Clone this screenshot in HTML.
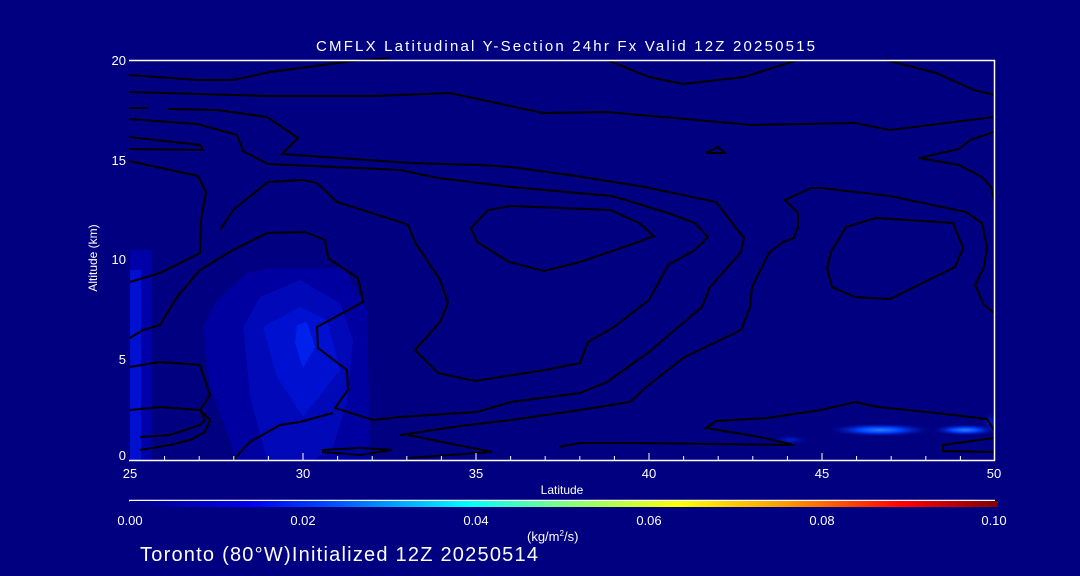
<!DOCTYPE html>
<html><head><meta charset="utf-8"><style>
html,body{margin:0;padding:0;background:#000080;}
svg{display:block;}
text{font-family:"Liberation Sans",sans-serif;fill:#fff;}
</style></head><body>
<svg width="1080" height="576" viewBox="0 0 1080 576" xmlns="http://www.w3.org/2000/svg">
<defs>
<linearGradient id="cb" x1="0" x2="1" y1="0" y2="0">
<stop offset="0" stop-color="#000080"/>
<stop offset="0.14" stop-color="#0000f0"/>
<stop offset="0.22" stop-color="#0040ff"/>
<stop offset="0.39" stop-color="#00ffff"/>
<stop offset="0.5" stop-color="#80ff80"/>
<stop offset="0.634" stop-color="#ffff00"/>
<stop offset="0.75" stop-color="#ffa000"/>
<stop offset="0.89" stop-color="#ff0000"/>
<stop offset="1" stop-color="#800000"/>
</linearGradient>
<radialGradient id="g1"><stop offset="0" stop-color="#2a80ff"/><stop offset="0.4" stop-color="#0040ff"/><stop offset="1" stop-color="#000080" stop-opacity="0"/></radialGradient>
<radialGradient id="g2"><stop offset="0" stop-color="#0020d0"/><stop offset="1" stop-color="#000080" stop-opacity="0"/></radialGradient>
</defs>
<rect width="1080" height="576" fill="#000080"/>
<rect x="130" y="250" width="22" height="210" fill="#0000a8"/>
<rect x="130" y="270" width="11" height="190" fill="#0010d0"/>
<polygon points="203,327 217,300 247,273 273,268 343,268 367,310 370,460 237,460 210,387" fill="#0000a0"/>
<polygon points="243,327 260,297 300,280 340,303 353,340 347,403 333,447 313,460 267,460 250,397" fill="#0008b8"/>
<polygon points="263,327 300,307 327,320 340,370 303,417 277,377" fill="#0010d0"/>
<polygon points="297,325 307,322 315,347 303,368 295,343" fill="#0020ec"/>
<ellipse cx="880" cy="430" rx="55" ry="7" fill="url(#g1)"/>
<ellipse cx="965" cy="430" rx="35" ry="6" fill="url(#g1)"/>
<ellipse cx="990" cy="422" rx="10" ry="12" fill="url(#g2)"/>
<ellipse cx="790" cy="440" rx="20" ry="6" fill="url(#g2)"/>
<g fill="none" stroke="#000" stroke-width="2">
<polyline points="129,75 198,80 233,80 270,72 353,61 390,58"/>
<polyline points="129,92 267,96 373,96 450,93 543,113 607,112 752,125 855,123 890,130 994,117"/>
<polyline points="607,60 649,77 683,84 744,77 798,60"/>
<polyline points="886,60 936,73 974,90 994,95"/>
<polyline points="129,108 147,108"/>
<polyline points="168,109 217,110 267,117 298,138 282,154 410,163 480,165 511,167 576,176 645,187 716,202 744,238 741,252 710,287 702,307 683,323 649,352 607,382 580,393 511,402 477,412 400,417 373,420 335,408 348,390 347,370 318,348 317,327 363,302 358,278 338,265 328,258 325,240 305,232 267,233 233,250 200,270 177,297 160,325 143,330 130,338"/>
<polyline points="129,119 197,124 237,135 243,151 268,164 400,170 438,178 511,187 612,196 668,213 695,223 708,237 695,250 668,265 649,300 614,327 588,342 580,363 545,370 475,381 438,373 415,350 440,322 448,303 440,280 415,242 408,225 400,222 337,202 317,183 303,180 268,182 233,210 220,230"/>
<polyline points="129,137 200,145 203,150 129,149"/>
<polyline points="129,161 198,176 206,192 201,220 200,253 160,273 130,282"/>
<polygon points="471,228 488,210 511,206 610,210 639,223 654,236 630,245 580,262 544,271 509,262 477,242"/>
<polygon points="846,227 876,218 953,223 963,248 955,267 890,299 855,297 832,287 827,268 831,252"/>
<polygon points="706,153 718,147 725,153"/>
<polyline points="994,132 970,140 959,149 919,158 959,165 982,177 991,187 994,200"/>
<polyline points="994,313 984,305 975,285 984,267 987,247 982,223 966,212 890,196 821,188 811,188 785,200 798,213 798,227 794,238 783,242 769,253 752,287 750,307 741,330 683,358 645,388 630,402 580,410 511,420 460,426 420,432 400,435"/>
<polyline points="130,367 160,362 200,365 205,380 210,395 200,410 210,420 205,432 190,440 170,445 140,450"/>
<polyline points="130,410 160,407 200,410 205,420 200,425 170,435 140,437"/>
<polyline points="233,460 250,442 280,425 300,422 333,413"/>
<polyline points="408,435 492,452 408,458"/>
<polyline points="559,447 580,443 630,443 794,445 760,437 706,428 716,421 767,418 821,410 855,402 878,407 936,413 987,419 994,430"/>
<polyline points="994,438 943,445 943,451 994,452"/>
<polyline points="322,450 360,448 392,450 360,455 322,452"/>
</g>
<g stroke="#fff" stroke-width="1.5" fill="none">
<line x1="129" y1="60.5" x2="995" y2="60.5"/>
<line x1="994.5" y1="60" x2="994.5" y2="461"/>
<line x1="129" y1="460.5" x2="995" y2="460.5"/>
<line x1="129" y1="500.5" x2="995" y2="500.5"/>
</g>
<g stroke="#fff" stroke-width="1">
<line x1="164.6" y1="460" x2="164.6" y2="456"/><line x1="199.2" y1="460" x2="199.2" y2="456"/><line x1="233.8" y1="460" x2="233.8" y2="456"/><line x1="268.4" y1="460" x2="268.4" y2="456"/>
<line x1="303" y1="460" x2="303" y2="453"/>
<line x1="337.6" y1="460" x2="337.6" y2="456"/><line x1="372.2" y1="460" x2="372.2" y2="456"/><line x1="406.8" y1="460" x2="406.8" y2="456"/><line x1="441.4" y1="460" x2="441.4" y2="456"/>
<line x1="476" y1="460" x2="476" y2="453"/>
<line x1="510.6" y1="460" x2="510.6" y2="456"/><line x1="545.2" y1="460" x2="545.2" y2="456"/><line x1="579.8" y1="460" x2="579.8" y2="456"/><line x1="614.4" y1="460" x2="614.4" y2="456"/>
<line x1="649" y1="460" x2="649" y2="453"/>
<line x1="683.6" y1="460" x2="683.6" y2="456"/><line x1="718.2" y1="460" x2="718.2" y2="456"/><line x1="752.8" y1="460" x2="752.8" y2="456"/><line x1="787.4" y1="460" x2="787.4" y2="456"/>
<line x1="822" y1="460" x2="822" y2="453"/>
<line x1="856.6" y1="460" x2="856.6" y2="456"/><line x1="891.2" y1="460" x2="891.2" y2="456"/><line x1="925.8" y1="460" x2="925.8" y2="456"/><line x1="960.4" y1="460" x2="960.4" y2="456"/>
</g>
<rect x="130" y="501" width="868" height="6" fill="url(#cb)"/>
<text x="316" y="51" font-size="15" textLength="499" lengthAdjust="spacing">CMFLX Latitudinal Y-Section 24hr  Fx Valid 12Z 20250515</text>
<g font-size="13" text-anchor="end">
<text x="126" y="65">20</text><text x="126" y="165">15</text><text x="126" y="264">10</text><text x="126" y="364">5</text><text x="126" y="460">0</text>
</g>
<text transform="translate(97,258) rotate(-90)" font-size="12" text-anchor="middle">Altitude (km)</text>
<g font-size="13" text-anchor="middle">
<text x="130" y="478">25</text><text x="303" y="478">30</text><text x="476" y="478">35</text><text x="649" y="478">40</text><text x="822" y="478">45</text><text x="994" y="478">50</text>
</g>
<text x="562" y="494" font-size="12" text-anchor="middle">Latitude</text>
<g font-size="13" text-anchor="middle">
<text x="130" y="525">0.00</text><text x="303" y="525">0.02</text><text x="476" y="525">0.04</text><text x="649" y="525">0.06</text><text x="822" y="525">0.08</text><text x="994" y="525">0.10</text>
</g>
<text x="527" y="541" font-size="13">(kg/m<tspan font-size="8" dy="-5">2</tspan><tspan dy="5">/s)</tspan></text>
<text x="140" y="561" font-size="20" textLength="398" lengthAdjust="spacing">Toronto (80°W)Initialized 12Z 20250514</text>
</svg>
</body></html>
